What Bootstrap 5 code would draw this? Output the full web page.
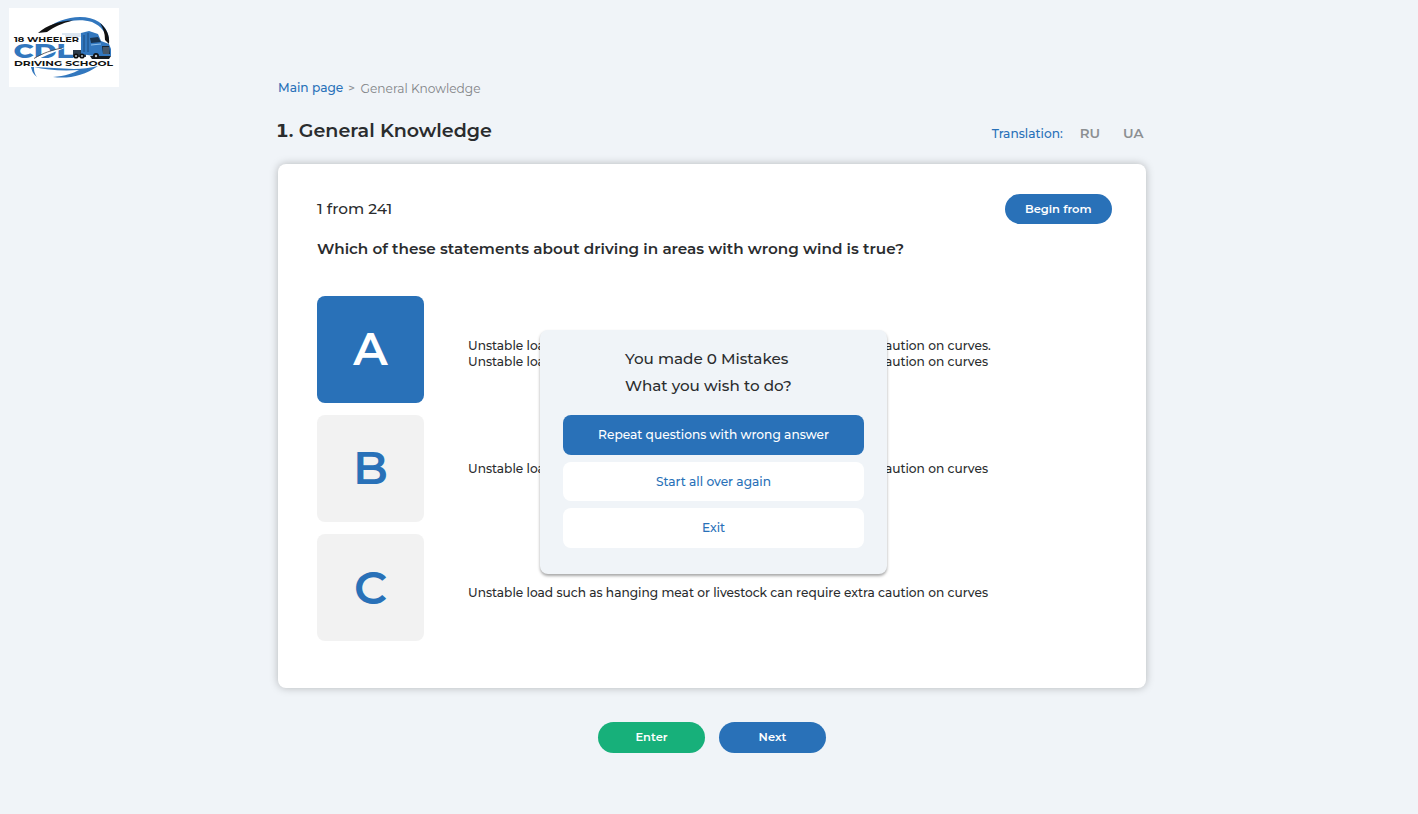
<!DOCTYPE html>
<html lang="en">
<head>
<meta charset="utf-8">
<meta name="viewport" content="width=device-width, initial-scale=1">
<title>General Knowledge</title>
<link href="https://cdn.jsdelivr.net/npm/bootstrap@5.3.0/dist/css/bootstrap.min.css" rel="stylesheet">
<style>
  body { background: #f0f4f8; font-family: Montserrat, Inter, sans-serif; color: #2a2c2e; height: 814px; overflow: hidden; font-size: 12.2px; line-height: 16px; font-weight: 500; }
  .logo-box { width: 110px; height: 79px; margin: 8px 0 0 9px; }
  .logo-box svg { display: block; }
  .page-col { width: 868px; margin-left: 278px; margin-top: -7.5px; }
  .c-blue { color: #2971b8; }
  .c-grey { color: #8c8f92; }
  .crumb-main { text-decoration: none; }
  .crumb-sep { margin: 0 5.5px 0 5px; font-size: 11.5px; }
  .crumb-cur { font-weight: 400; margin-top: 1px; color: #808386; }
  .title-row { height: 24px; margin-top: 22.5px; }
  .title-row h1 { font-size: 19.1px; line-height: 24px; font-weight: 600; margin: 0 0 0 -2px; }
  .title-row h1 .num { font-family: "DejaVu Sans", sans-serif; font-weight: 700; font-size: 18px; margin-right: .3px; }
  .lang { padding-right: 2.5px; padding-top: 6px; }
  .lang .lb { margin: .5px 17px 0 0; }
  .lang .lg { font-weight: 600; font-size: 13.4px; }
  .lang .lg + .lg { margin-left: 23px; }
  .quiz { height: 524px; margin-top: 21px; border: 0; border-radius: 8px; box-shadow: 0 0 9px rgba(0,0,0,.25); padding: 29.5px 34px 0 39px; }
  .pill { width: 107.5px; height: 30.5px; border: 0; border-radius: 16px; padding: 0; font-size: 11.5px; line-height: 30.5px; font-weight: 600; color: #fff; }
  .pill:hover { color: #fff; }
  .bg-main { background: #2971b8; color: #fff; }
  .bg-ok { background: #17b07a; }
  .count { font-size: 15.3px; line-height: 29px; }
  .question { font-size: 15.23px; line-height: 20px; font-weight: 600; margin: 14.5px 0 0; white-space: nowrap; }
  .answers { margin-top: 37px; gap: 12.4px; }
  .tile { width: 107px; height: 107px; border-radius: 8px; background: #f2f2f2; color: #2971b8; font-size: 46px; font-weight: 600; line-height: 1; flex: none; }
  .tile.on { background: #2971b8; color: #fff; }
  .ans { margin-left: 44px; font-size: 12.18px; line-height: 15.5px; white-space: nowrap; }
  .pa { padding-top: 42.5px; } .pb { padding-top: 46.5px; } .pc { padding-top: 50.5px; }
  .dialog-box { position: absolute; left: 262px; top: 166px; width: 346.5px; height: 244px; border-radius: 8px; background: #f0f4f8; box-shadow: 0 2px 3px rgba(0,0,0,.35); padding: 15px 22.5px 0 23px; }
  .msg { font-size: 15.2px; line-height: 27.3px; margin: 0 0 15.5px 62px; }
  .choice { display: block; width: 100%; height: 39.5px; border: 0; border-radius: 8px; background: #fff; color: #2971b8; font-size: 12.2px; font-weight: 500; line-height: 40px; padding: 0; margin-bottom: 7px; }
  .choice.bg-main { background: #2971b8; color: #fff; }
  .foot { margin-top: 34px; gap: 13.5px; }
</style>
</head>
<body>
<header class="logo-box">
  <svg width="110" height="79" viewBox="9 8 110 79" role="img" aria-label="18 Wheeler CDL Driving School">
    <rect x="9" y="8" width="110" height="79" fill="#fff"/>
    <path d="M44 31C57 18 84 12 99 22C106 27 110 35 109 44C107 33 101 26 92 22C76 17 58 23 44 31Z" fill="#3277be"/>
    <path d="M38 33C47 25 59 21 73 20.500C61 23.500 54 27 47 32Z" fill="#111"/>
    <path d="M100 23C106 28 110 35 109 44L105 40C105 33 103 28 100 23Z" fill="#111"/>
    <path d="M31 67C32 71 33 74 37 77C34 73 34 70 34 67Z" fill="#3277be"/>
    <path d="M34 67L74 69C82 69 90 68 98 66C84 76 68 79 53 77C65 76 74 73 79 70C62 71 46 70 34 67Z" fill="#3277be"/>
    <g font-family="Montserrat, sans-serif" font-weight="800">
      <text x="13.500" y="58.200" font-size="20" textLength="60" lengthAdjust="spacingAndGlyphs" fill="#3277be">CDL</text>
      <path d="M33 59C42 54 53 50 67 47C55 52 46 55 39 59Z" fill="#fff"/>
      <path d="M34 58.500C43 53 52 50 62 48" stroke="#444" stroke-width=".8" fill="none"/>
      <text x="14" y="42.300" font-size="7.600" font-weight="700" textLength="65" lengthAdjust="spacingAndGlyphs" fill="#111">18 WHEELER</text>
      <text x="14" y="65.500" font-size="7.600" font-weight="700" textLength="99" lengthAdjust="spacingAndGlyphs" fill="#111">DRIVING SCHOOL</text>
    </g>
    <path d="M62 34H81M65 36H81" stroke="#9bb8d5" stroke-width=".7"/>
    <path d="M73 50H86V57H73Z" fill="#29394a"/>
    <path d="M81 33L89 31L98 34L101 41L109 44L111 49V56L102 58L94 56L81 54Z" fill="#3277be"/>
    <path d="M90 38L98 37L101 42L91 43Z" fill="#183451"/>
    <path d="M84 35V52M88 33V52" stroke="#15406d" stroke-width=".8"/>
    <path d="M91 45L101 44" stroke="#8fc1ee" stroke-width="1"/>
    <path d="M102 46H109L110 54H103Z" fill="#172636"/>
    <path d="M104 47V54M106 47V54M108 47V54" stroke="#b7cde2" stroke-width=".6"/>
    <path d="M90 56L111 56L109 59H92Z" fill="#151b22"/>
    <g fill="#111"><circle cx="76" cy="56" r="2.600"/><circle cx="82" cy="56" r="2.600"/><circle cx="96" cy="56" r="3"/></g>
    <g fill="#b6c2cd"><circle cx="76" cy="56" r="1"/><circle cx="82" cy="56" r="1"/><circle cx="96" cy="56" r="1.200"/></g>
  </svg>
</header>
<main class="page-col">
  <nav class="d-flex align-items-center">
    <a href="#" class="crumb-main c-blue">Main page</a><span class="crumb-sep c-grey">&gt;</span><span class="crumb-cur">General Knowledge</span>
  </nav>
  <div class="title-row d-flex justify-content-between">
    <h1><span class="num">1</span>. General Knowledge</h1>
    <div class="lang d-flex"><span class="lb c-blue">Translation:</span><span class="lg c-grey">RU</span><span class="lg c-grey">UA</span></div>
  </div>
  <section class="card quiz">
    <div class="d-flex justify-content-between">
      <div class="count">1 from 241</div>
      <button class="btn pill bg-main">Begin from</button>
    </div>
    <h2 class="question">Which of these statements about driving in areas with wrong wind is true?</h2>
    <div class="answers d-flex flex-column">
      <div class="d-flex"><div class="tile on d-flex align-items-center justify-content-center">A</div><div class="ans pa">Unstable load such as hanging meat or livestock can require extra caution on curves.<br>Unstable load such as hanging meat or livestock can require extra caution on curves</div></div>
      <div class="d-flex"><div class="tile d-flex align-items-center justify-content-center">B</div><div class="ans pb">Unstable load such as hanging meat or livestock can require extra caution on curves</div></div>
      <div class="d-flex"><div class="tile d-flex align-items-center justify-content-center">C</div><div class="ans pc">Unstable load such as hanging meat or livestock can require extra caution on curves</div></div>
    </div>
    <div class="dialog-box" role="dialog">
      <div class="msg">You made 0 Mistakes<br>What you wish to do?</div>
      <button class="btn choice bg-main">Repeat questions with wrong answer</button>
      <button class="btn choice">Start all over again</button>
      <button class="btn choice">Exit</button>
    </div>
  </section>
  <div class="foot d-flex justify-content-center">
    <button class="btn pill bg-ok">Enter</button>
    <button class="btn pill bg-main">Next</button>
  </div>
</main>
<script src="https://cdn.jsdelivr.net/npm/bootstrap@5.3.0/dist/js/bootstrap.bundle.min.js"></script>
</body>
</html>
